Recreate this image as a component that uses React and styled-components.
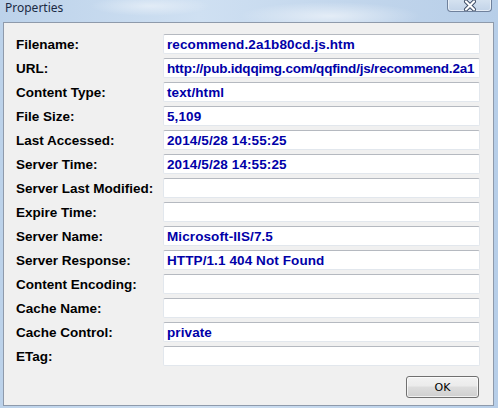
import React from "react";
import styled, { createGlobalStyle } from "styled-components";

const GlobalStyle = createGlobalStyle`
  html, body {
    margin: 0;
    padding: 0;
    background: #c7d9ec;
  }
`;

const rows = [
  ["Filename:", "recommend.2a1b80cd.js.htm"],
  ["URL:", "http://pub.idqqimg.com/qqfind/js/recommend.2a1", true],
  ["Content Type:", "text/html"],
  ["File Size:", "5,109"],
  ["Last Accessed:", "2014/5/28 14:55:25"],
  ["Server Time:", "2014/5/28 14:55:25"],
  ["Server Last Modified:", ""],
  ["Expire Time:", ""],
  ["Server Name:", "Microsoft-IIS/7.5"],
  ["Server Response:", "HTTP/1.1 404 Not Found"],
  ["Content Encoding:", ""],
  ["Cache Name:", ""],
  ["Cache Control:", "private"],
  ["ETag:", ""],
];

const App = () => {
  return (
    <>
      <GlobalStyle />
      <Window>
        <TitleBar>
          <Title>Properties</Title>
          <CloseButton>
            <svg width="16" height="11" viewBox="0 0 16 11">
              <path
                d="M4 1.5 L12 9.5 M12 1.5 L4 9.5"
                stroke="#3b4a63"
                strokeWidth="4"
                strokeLinecap="round"
              />
              <path
                d="M4 1.5 L12 9.5 M12 1.5 L4 9.5"
                stroke="#ffffff"
                strokeWidth="2.2"
                strokeLinecap="round"
              />
            </svg>
          </CloseButton>
        </TitleBar>
        <Client>
          <Form>
            {rows.map(([label, value, tight]) => (
              <React.Fragment key={label}>
                <Label>{label}</Label>
                <Field>
                  <Value $tight={tight}>{value}</Value>
                </Field>
              </React.Fragment>
            ))}
          </Form>
          <Footer>
            <Button>OK</Button>
          </Footer>
        </Client>
      </Window>
    </>
  );
};

const Window = styled.div`
  width: 498px;
  height: 408px;
  display: flex;
  flex-direction: column;
  box-sizing: border-box;
  background:
    radial-gradient(ellipse 90px 14px at 330px 16px, rgba(255, 255, 255, 0.55), transparent),
    radial-gradient(ellipse 60px 10px at 150px 6px, rgba(255, 255, 255, 0.45), transparent),
    linear-gradient(90deg, #bcd2ea 0%, #cfe0f2 40%, #c2d6ec 70%, #b7cee8 100%);
`;

const TitleBar = styled.div`
  height: 22px;
  display: flex;
  align-items: flex-start;
  justify-content: space-between;
  padding: 0 6px 0 5px;
  flex-shrink: 0;
`;

const Title = styled.span`
  font-family: "Noto Sans", "Open Sans", sans-serif;
  font-size: 12px;
  line-height: 16px;
  color: #1b2a44;
`;

const CloseButton = styled.div`
  width: 43px;
  height: 12px;
  margin-top: -1px;
  border: 1px solid #6f819c;
  border-top: none;
  border-radius: 0 0 4px 4px;
  background: linear-gradient(#d6e3f1, #c2d3e8);
  box-shadow: inset 0 0 0 1px rgba(255, 255, 255, 0.55);
  display: flex;
  align-items: center;
  justify-content: center;
`;

const Client = styled.div`
  flex: 1;
  margin: 0 4px 2px 3px;
  border: 1px solid #8e9aab;
  background: #f0f0f0;
  display: flex;
  flex-direction: column;
  padding: 11px 14px 0 12px;
`;

const Form = styled.div`
  display: grid;
  grid-template-columns: 147px 317px;
  grid-auto-rows: 20px;
  row-gap: 4px;
`;

const Label = styled.div`
  font-family: "Liberation Sans", Arial, sans-serif;
  font-weight: bold;
  font-size: 13.5px;
  color: #000000;
  display: flex;
  align-items: center;
  padding-top: 1px;
  white-space: nowrap;
`;

const Field = styled.div`
  box-sizing: border-box;
  background: #ffffff;
  border: 1px solid #e2e7ed;
  border-top-color: #b5b9c0;
  border-radius: 2px;
  padding: 1px 0 0 3px;
  display: flex;
  align-items: center;
  overflow: hidden;
`;

const Value = styled.span`
  font-family: "Liberation Sans", Arial, sans-serif;
  font-weight: bold;
  font-size: 13.5px;
  letter-spacing: ${(p) => (p.$tight ? "-0.2px" : "0.1px")};
  color: #0000a8;
  white-space: nowrap;
`;

const Footer = styled.div`
  display: flex;
  justify-content: flex-end;
  margin-top: 10px;
`;

const Button = styled.div`
  width: 73px;
  height: 22px;
  box-sizing: border-box;
  border: 1px solid #707070;
  border-radius: 3px;
  background: linear-gradient(#f2f2f2 0%, #ebebeb 45%, #dddddd 50%, #cfcfcf 100%);
  box-shadow: inset 0 0 0 1px rgba(255, 255, 255, 0.7);
  font-family: "DejaVu Sans", sans-serif;
  font-size: 11px;
  color: #000000;
  display: flex;
  align-items: center;
  justify-content: center;
`;

export default App;
